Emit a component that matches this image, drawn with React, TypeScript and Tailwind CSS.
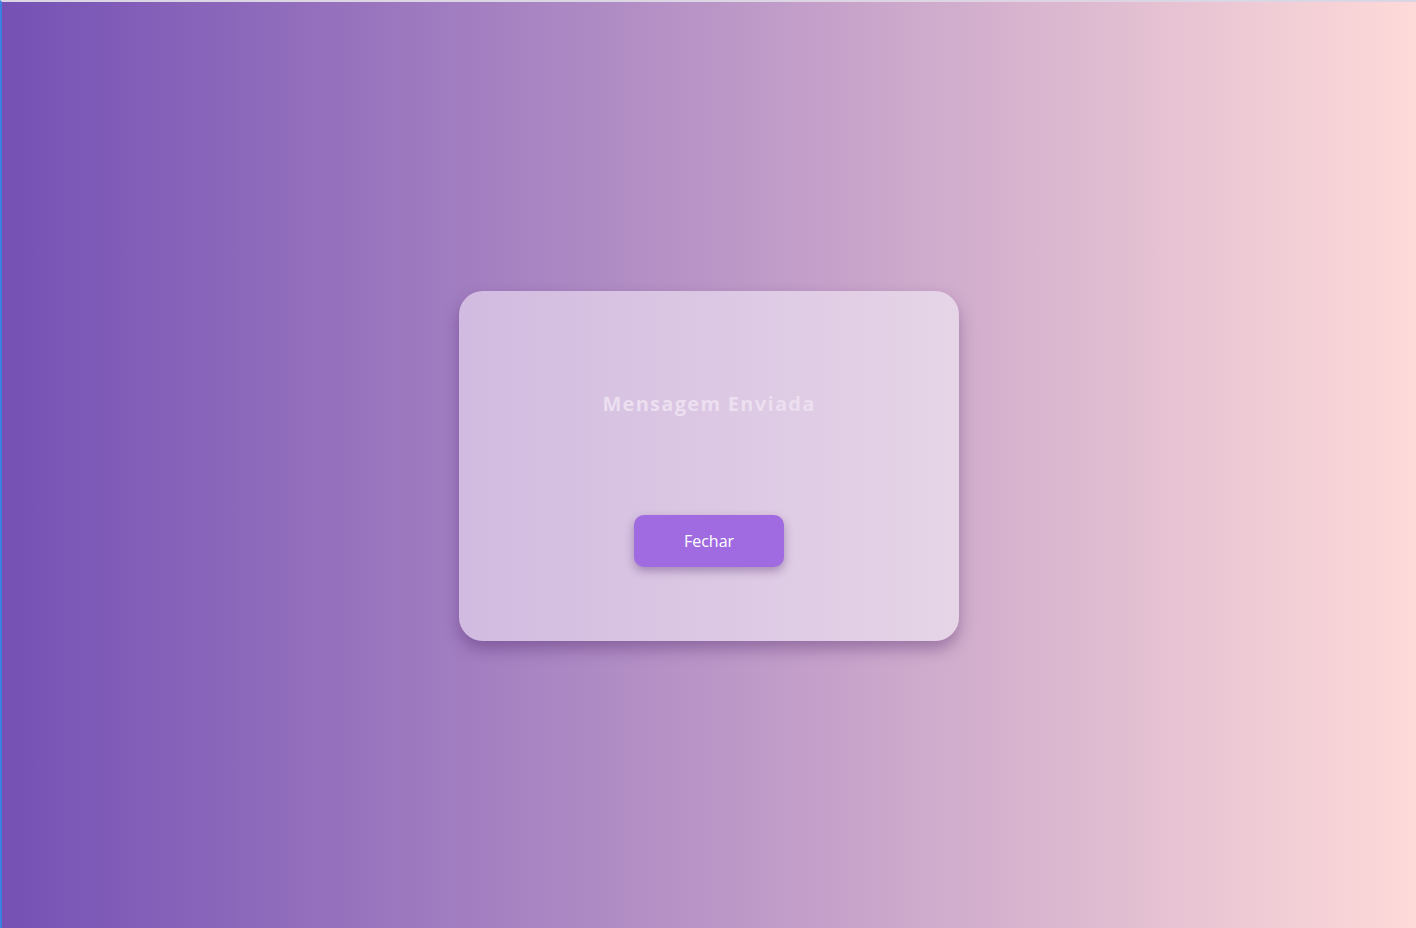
import React from "react";

export default function App() {
  return (
    <div className="w-[1416px] h-[928px] border-t-2 border-t-[#dcd6e4] border-l-2 border-l-[#3b7fe0] bg-[linear-gradient(to_right,#7551b5,#fedad9)] flex items-center justify-center overflow-hidden" style={{ fontFamily: '"Open Sans", sans-serif' }}>
      <div className="w-[500px] h-[350px] mt-[1px] rounded-[24px] bg-[linear-gradient(to_right,#d1bbe0,#e6d4e7)] shadow-[0_8px_16px_rgba(60,20,90,0.35)] flex flex-col items-center">
        <h1 className="mt-[100px] text-[20px] leading-[26px] font-bold tracking-[1.3px] text-[#ecdff0]">Mensagem Enviada</h1>
        <button className="mt-[98px] w-[150px] h-[52px] rounded-[10px] bg-[#a06ae0] text-white text-[16px] shadow-[0_4px_10px_rgba(60,20,90,0.35)]">Fechar</button>
      </div>
    </div>
  );
}
